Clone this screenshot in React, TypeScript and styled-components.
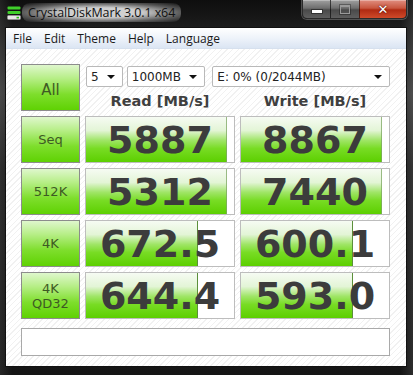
import styled, { createGlobalStyle } from 'styled-components';

const GlobalStyle = createGlobalStyle`
  html, body {
    margin: 0;
    padding: 0;
    background: #1b1b1b;
  }
`;

type Result = {
  label: string[];
  read: string;
  readPct: number;
  write: string;
  writePct: number;
};

const results: Result[] = [
  { label: ['Seq'], read: '5887', readPct: 95, write: '8867', writePct: 95 },
  { label: ['512K'], read: '5312', readPct: 95, write: '7440', writePct: 95 },
  { label: ['4K'], read: '672.5', readPct: 76, write: '600.1', writePct: 76 },
  { label: ['4K', 'QD32'], read: '644.4', readPct: 76, write: '593.0', writePct: 76 },
];

const Window = styled.div`
  width: 413px;
  height: 375px;
  display: flex;
  flex-direction: column;
  box-sizing: border-box;
  background:
    linear-gradient(to right, rgba(255, 255, 255, 0.08), transparent 3%, transparent 97%, rgba(255, 255, 255, 0.1)),
    linear-gradient(to bottom, #0e0e0e 0%, #262626 12%, #3a3a3a 25%, #1e1e1e 45%, #151515 100%);
  overflow: hidden;
`;

const TitleBar = styled.div`
  height: 27px;
  display: flex;
  align-items: flex-start;
  justify-content: space-between;
  padding-left: 7px;
`;

const TitleLeft = styled.div`
  display: flex;
  align-items: center;
  gap: 7px;
  height: 25px;
`;

const TitleText = styled.span`
  font-family: 'Open Sans', 'Noto Sans', sans-serif;
  font-size: 12.5px;
  color: #111;
  letter-spacing: -0.1px;
  padding: 1px 6px;
  margin-left: -6px;
  border-radius: 8px;
  background: radial-gradient(ellipse at center, rgba(255, 255, 255, 0.8) 35%, rgba(255, 255, 255, 0.3) 70%, rgba(255, 255, 255, 0) 100%);
`;

const CaptionGroup = styled.div`
  display: flex;
  margin-right: 6px;
  height: 18px;
  border: 1px solid #2a2a2a;
  border-top: none;
  border-radius: 0 0 5px 5px;
  overflow: hidden;
  box-shadow: 0 0 0 1px rgba(255, 255, 255, 0.25);
`;

const CaptionButton = styled.div<{ $width: number; $close?: boolean }>`
  width: ${(p) => p.$width}px;
  display: flex;
  align-items: center;
  justify-content: center;
  border-left: 1px solid rgba(0, 0, 0, 0.6);
  box-shadow: inset 0 1px 0 rgba(255, 255, 255, 0.3);
  background: ${(p) =>
    p.$close
      ? 'linear-gradient(to bottom, #e08e80 0%, #c8563f 45%, #b02a12 55%, #cf4a2a 100%)'
      : 'linear-gradient(to bottom, #a0a0a0 0%, #6e6e6e 45%, #4a4a4a 55%, #5e5e5e 100%)'};

  &:first-child {
    border-left: none;
  }
`;

const MinGlyph = styled.div`
  width: 10px;
  height: 3px;
  margin-top: 4px;
  background: #fff;
  border: 1px solid #333;
`;

const MaxGlyph = styled.div`
  width: 8px;
  height: 6px;
  border: 1px solid #9a9a9a;
  border-top-width: 2px;
  background: transparent;
  box-shadow: 0 0 0 1px rgba(0, 0, 0, 0.3);
`;

const CloseGlyph = styled.span`
  font-family: 'DejaVu Sans', sans-serif;
  font-weight: bold;
  font-size: 13px;
  line-height: 1;
  color: #fff;
  text-shadow: 0 0 1px #5a0a00, 0 0 2px #5a0a00;
`;

const Client = styled.div`
  flex: 1;
  margin: 0 6px 8px 5px;
  display: flex;
  flex-direction: column;
  border: 1px solid #111;
  background: repeating-linear-gradient(135deg, #ffffff 0px, #ffffff 3px, #f1f1f1 3px, #f1f1f1 4px);
`;

const MenuBar = styled.div`
  height: 20px;
  display: flex;
  align-items: center;
  padding-left: 1px;
  background: linear-gradient(to bottom, #ffffff 0%, #eef3fa 50%, #dbe5f3 100%);
  border-bottom: 1px solid #d6e0ee;
`;

const MenuItem = styled.span`
  font-family: 'Open Sans', 'Noto Sans', sans-serif;
  font-size: 12px;
  color: #1a1a1a;
  padding: 0 6px;
`;

const Board = styled.div`
  display: grid;
  grid-template-columns: 59px 150px 150px;
  column-gap: 5px;
  row-gap: 5px;
  padding: 15px 0 0 15px;
`;

const LabelButton = styled.div`
  height: 47px;
  box-sizing: border-box;
  display: flex;
  flex-direction: column;
  align-items: center;
  justify-content: center;
  border: 1px solid #8c8c8c;
  background: linear-gradient(to bottom, #dff7cd 0%, #b6ee86 30%, #7ede2c 65%, #5fd203 100%);
  font-family: 'DejaVu Sans', sans-serif;
  font-size: 13px;
  line-height: 15px;
  color: #3e5a24;
`;

const AllLabel = styled.span`
  font-size: 15px;
  margin-top: 6px;
`;

const TopPanel = styled.div`
  grid-column: 2 / 4;
  display: flex;
  flex-direction: column;
  padding-top: 2px;
`;

const SelectRow = styled.div`
  display: flex;
  gap: 4px;
`;

const SelectBox = styled.div<{ $width: number; $gapBefore?: number }>`
  width: ${(p) => p.$width}px;
  margin-left: ${(p) => p.$gapBefore ?? 0}px;
  height: 21px;
  box-sizing: border-box;
  display: flex;
  align-items: center;
  justify-content: space-between;
  padding: 0 7px 0 4px;
  background: #fff;
  border: 1px solid #b9b9b9;
  border-radius: 2px;
  font-family: 'DejaVu Sans', sans-serif;
  font-size: 12px;
  color: #222;
`;

const Caret = styled.span`
  width: 0;
  height: 0;
  border-left: 4px solid transparent;
  border-right: 4px solid transparent;
  border-top: 4px solid #111;
`;

const HeaderRow = styled.div`
  display: grid;
  grid-template-columns: 150px 150px;
  column-gap: 5px;
  margin-top: 6px;
`;

const Header = styled.div`
  text-align: center;
  font-family: 'DejaVu Sans', sans-serif;
  font-weight: bold;
  font-size: 14.5px;
  line-height: 17px;
  color: #3f3f3f;
`;

const ValueBox = styled.div`
  height: 47px;
  box-sizing: border-box;
  display: flex;
  align-items: center;
  justify-content: center;
  border: 1px solid #bdbdbd;
  background-color: #fff;
  background-repeat: no-repeat;
  font-family: 'DejaVu Sans', sans-serif;
  font-weight: bold;
  font-size: 38px;
  color: #3c3c3c;
`;

const barLayers =
  'linear-gradient(to left, #5b8f3a 0px, #5b8f3a 1px, transparent 1px), ' +
  'linear-gradient(to bottom, #f6fbf3 0%, #e3f5d6 30%, #9fe566 52%, #78dc24 70%, #5ccf00 100%)';

const Comment = styled.div`
  grid-column: 1 / 4;
  height: 28px;
  margin-top: 4px;
  box-sizing: border-box;
  background: #fff;
  border: 1px solid #a9a9a9;
`;

function AppIcon() {
  return (
    <svg width="14" height="14" viewBox="0 0 14 14">
      <rect x="0.5" y="0.5" width="13" height="3" rx="1" fill="#3fcf2a" />
      <rect x="0.5" y="5" width="13" height="3" rx="1" fill="#3fcf2a" />
      <rect x="0.5" y="9.5" width="13" height="4" rx="1" fill="#e8e8e8" stroke="#9a9a9a" strokeWidth="0.6" />
      <rect x="9.5" y="10.8" width="2.5" height="1.6" fill="#2fbf1a" />
    </svg>
  );
}

function Value({ text, pct }: { text: string; pct: number }) {
  return (
    <ValueBox
      style={{
        backgroundImage: barLayers,
        backgroundSize: `${pct}% 100%, ${pct}% 100%`,
      }}
    >
      {text}
    </ValueBox>
  );
}

function Row({ result }: { result: Result }) {
  return (
    <>
      <LabelButton>
        {result.label.map((l) => (
          <span key={l}>{l}</span>
        ))}
      </LabelButton>
      <Value text={result.read} pct={result.readPct} />
      <Value text={result.write} pct={result.writePct} />
    </>
  );
}

export default function App() {
  return (
    <>
      <GlobalStyle />
      <Window>
        <TitleBar>
          <TitleLeft>
            <AppIcon />
            <TitleText>CrystalDiskMark 3.0.1 x64</TitleText>
          </TitleLeft>
          <CaptionGroup>
            <CaptionButton $width={27}>
              <MinGlyph />
            </CaptionButton>
            <CaptionButton $width={28}>
              <MaxGlyph />
            </CaptionButton>
            <CaptionButton $width={46} $close>
              <CloseGlyph>✕</CloseGlyph>
            </CaptionButton>
          </CaptionGroup>
        </TitleBar>
        <Client>
          <MenuBar>
            {['File', 'Edit', 'Theme', 'Help', 'Language'].map((m) => (
              <MenuItem key={m}>{m}</MenuItem>
            ))}
          </MenuBar>
          <Board>
            <LabelButton>
              <AllLabel>All</AllLabel>
            </LabelButton>
            <TopPanel>
              <SelectRow>
                <SelectBox $width={37} $gapBefore={1}>
                  5 <Caret />
                </SelectBox>
                <SelectBox $width={79}>
                  1000MB <Caret />
                </SelectBox>
                <SelectBox $width={179} $gapBefore={3}>
                  E: 0% (0/2044MB) <Caret />
                </SelectBox>
              </SelectRow>
              <HeaderRow>
                <Header>Read [MB/s]</Header>
                <Header>Write [MB/s]</Header>
              </HeaderRow>
            </TopPanel>
            {results.map((r) => (
              <Row key={r.label.join(' ')} result={r} />
            ))}
            <Comment />
          </Board>
        </Client>
      </Window>
    </>
  );
}
